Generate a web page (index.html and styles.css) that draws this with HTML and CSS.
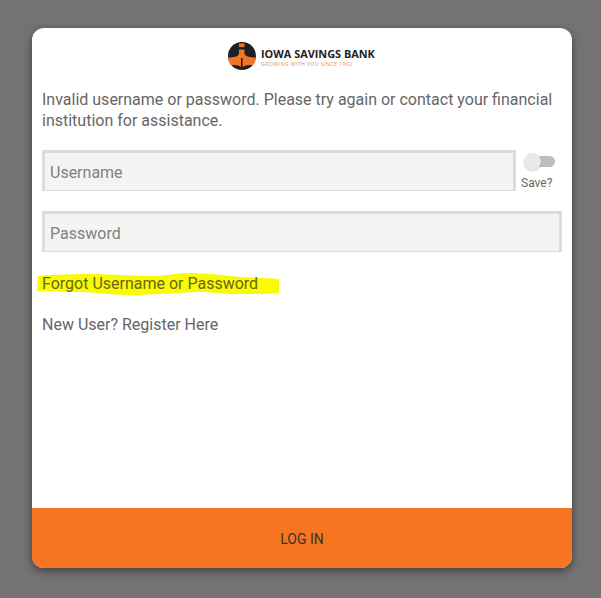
FILE: index.html
```html
<!DOCTYPE html>
<html lang="en">
<head>
<meta charset="utf-8">
<title>Iowa Savings Bank Login</title>
<link rel="stylesheet" href="styles.css">
</head>
<body>
<main class="card">
  <div class="content">
    <header class="brand">
      <svg class="brand-mark" viewBox="0 0 28 28" aria-hidden="true">
        <circle cx="14" cy="14" r="14" fill="#1d2024"/>
        <path d="M11 7.5 H16.5 V12 C17.5 14.5 22 15.5 27.8 15.5 C27.6 18.5 26.6 21 25 23 C21 23 17.5 23 14.6 25 V16 H13 V25 C10.5 23 7 23 3 23 C1.4 21 0.4 18.5 0.2 15.5 C6 15.5 10 14.5 11 12 Z" fill="#f47521"/>
        <rect x="11" y="1.5" width="5.5" height="3.6" fill="#f47521"/>
      </svg>
      <div class="brand-text">
        <div class="brand-name">IOWA SAVINGS BANK</div>
        <div class="brand-tag">GROWING WITH YOU SINCE 1902</div>
      </div>
    </header>
    <p class="message">Invalid username or password. Please try again or contact your financial institution for assistance.</p>
    <div class="user-row">
      <input class="field" type="text" placeholder="Username">
      <div class="save">
        <span class="toggle"><span class="knob"></span></span>
        <span class="save-label">Save?</span>
      </div>
    </div>
    <input class="field field-full" type="password" placeholder="Password">
    <div class="forgot">
      <svg class="marker" viewBox="0 0 243 27" aria-hidden="true">
        <path d="M1 6 C15 4 28 5 40 4 C60 3 85 6 115 6 C130 6 140 3 150 3 C165 3 185 5 203 7 C220 8 232 8 242 9 L242 23 C228 24 214 24 200 24 C185 24 175 22 163 22 C148 22 135 24 120 24 C108 25 95 25 85 25 C68 24 55 22 40 22 C25 22 12 21 0 21 Z" fill="#fafa05"/>
      </svg>
      <a class="link link-forgot" href="#">Forgot Username or Password</a>
    </div>
    <a class="link link-register" href="#">New User? Register Here</a>
  </div>
  <button class="login" type="button">LOG IN</button>
</main>
</body>
</html>
```
FILE: styles.css
```css
* { box-sizing: border-box; }
html, body { height: 100%; }
body {
  margin: 0;
  background: #747272;
  padding: 28px 29px 30px 32px;
  font-family: Roboto, "Liberation Sans", sans-serif;
  color: #666;
  overflow: hidden;
}
.card {
  width: 540px;
  height: 540px;
  background: #fff;
  border-radius: 12px;
  box-shadow: 0 3px 8px rgba(0, 0, 0, 0.45);
  display: flex;
  flex-direction: column;
  overflow: hidden;
}
.content {
  flex: 1;
  padding: 13px 10px 0;
  display: flex;
  flex-direction: column;
}
.brand {
  display: flex;
  align-items: center;
  gap: 5px;
  height: 29px;
  padding-left: 186px;
}
.brand-mark { width: 28px; height: 28px; flex: none; }
.brand-text { display: flex; flex-direction: column; gap: 2px; padding-top: 4px; }
.brand-name {
  font-family: "Open Sans", sans-serif;
  font-weight: 700;
  font-size: 10.9px;
  line-height: 11px;
  color: #222;
  white-space: nowrap;
}
.brand-tag {
  font-family: "Open Sans", sans-serif;
  font-size: 5.4px;
  line-height: 6px;
  letter-spacing: 0.3px;
  color: #e8955a;
  white-space: nowrap;
}
.message {
  margin: 19px 0 0;
  font-size: 16px;
  line-height: 21px;
  color: #666;
}
.user-row {
  display: flex;
  gap: 5px;
  margin-top: 19px;
}
.field {
  display: block;
  height: 41px;
  width: 474px;
  flex: none;
  border: solid #dcdcdc;
  border-width: 3px 3px 1px 3px;
  border-radius: 0;
  background: #f4f4f4;
  padding: 2px 5px 0;
  font: 16px Roboto, "Liberation Sans", sans-serif;
  outline: none;
}
.field::placeholder { color: #808080; opacity: 1; }
.field-full { width: 520px; margin-top: 20px; }
.save {
  display: flex;
  flex-direction: column;
  align-items: flex-start;
}
.toggle {
  position: relative;
  display: block;
  width: 28px;
  height: 11px;
  margin: 6px 0 0 6px;
  border-radius: 6px;
  background: #bdbdbd;
}
.knob {
  position: absolute;
  left: -3px;
  top: -3px;
  width: 17px;
  height: 17px;
  border-radius: 50%;
  background: #e9e9e9;
  box-shadow: 0 1px 2px rgba(0, 0, 0, 0.2);
}
.save-label {
  margin-top: 9px;
  font-size: 12px;
  line-height: 14px;
  color: #666;
}
.forgot {
  position: relative;
  margin-top: 21px;
  height: 21px;
  display: flex;
  align-items: center;
}
.marker {
  position: absolute;
  left: -5px;
  top: -3px;
  width: 243px;
  height: 27px;
}
.link {
  font-size: 16px;
  line-height: 21px;
  color: #666;
  text-decoration: none;
}
.link-forgot { position: relative; color: #66661a; }
.link-register { margin-top: 20px; }
.login {
  flex: none;
  height: 60px;
  width: 100%;
  border: 0;
  background: #f77520;
  color: #333;
  font: 14px Roboto, "Liberation Sans", sans-serif;
  padding: 2px 0 0;
}
```
